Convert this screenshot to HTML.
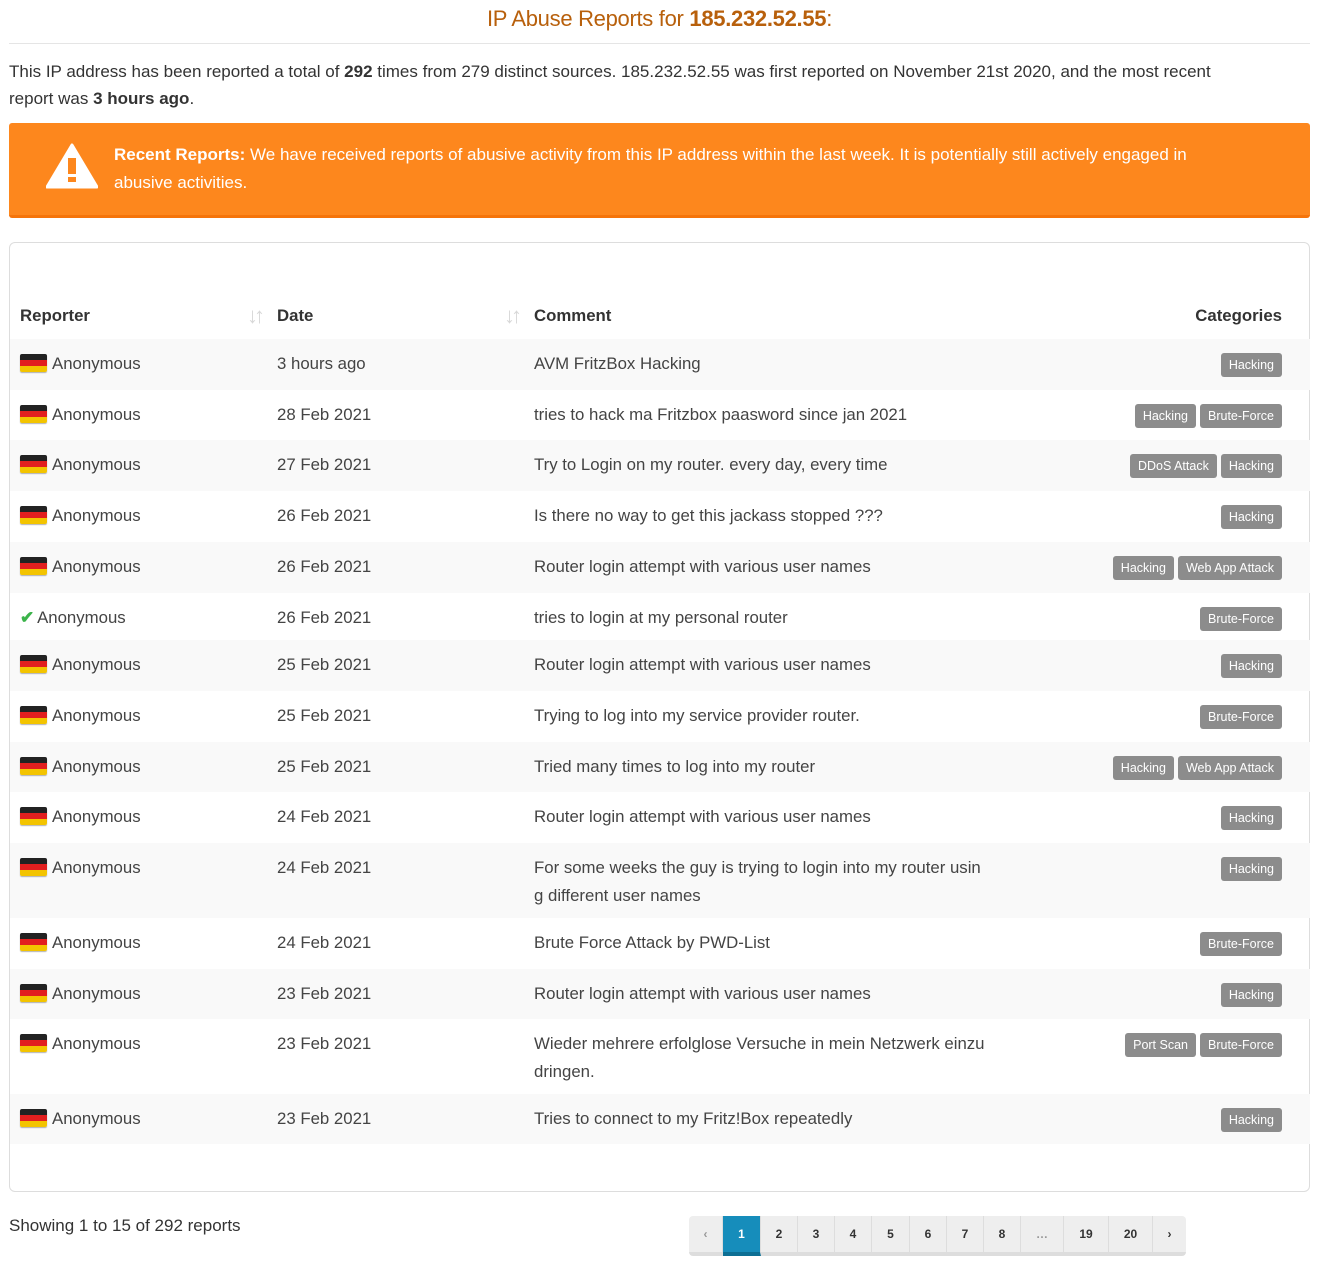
<!DOCTYPE html>
<html><head><meta charset="utf-8"><style>
*{box-sizing:border-box}
body{margin:0;background:#fff;font-family:"Liberation Sans",sans-serif;color:#444;width:1319px;height:1266px;overflow:hidden;position:relative}
h1{position:absolute;top:6px;left:0;width:1319px;text-align:center;margin:0;font-weight:normal;font-size:22px;color:#b8600c;letter-spacing:-0.3px}
h1 b{font-weight:bold}
.hr{position:absolute;top:43px;left:9px;width:1301px;border-top:1px solid #e5e5e5}
.intro{position:absolute;top:58px;left:9px;width:1245px;font-size:17px;line-height:27px;color:#333}
.alert{position:absolute;top:123px;left:9px;width:1301px;height:95px;background:#fd871d;border-bottom:3px solid #f5740a;border-radius:3px;color:#fff;font-size:17px;line-height:28px;padding:18px 80px 0 105px}
.alert svg{position:absolute;left:37px;top:20px}
.card{position:absolute;top:242px;left:9px;width:1301px;height:950px;border:1px solid #ddd;border-radius:6px}
table{position:absolute;top:50px;left:0;width:1300px;border-collapse:collapse;table-layout:fixed;font-size:16.8px;color:#444}
th{text-align:left;font-weight:bold;height:46px;vertical-align:middle;padding:0 10px;position:relative;color:#333}
td{padding:0 10px;vertical-align:top;padding-top:11px;line-height:28px}
tbody tr:nth-child(odd){background:#f9f9f9}
td.c{text-align:right;padding-right:28px;padding-top:11px}
.l{display:inline-block;background:#8c8c8c;color:#fff;font-size:12.5px;line-height:24px;padding:0 8px;border-radius:3px;margin-left:4px}
.flag{display:inline-block;width:27px;height:18px;vertical-align:-3px;margin-right:5px;background:linear-gradient(#222 0 33%,#e21f1f 33% 66%,#f3c400 66%);border-radius:2px;box-shadow:0 1px 1px rgba(0,0,0,.3)}
.sort{position:absolute;right:6px;top:10px;color:#d8d8d8;font-size:22px;font-weight:bold;letter-spacing:-4px}
.show{position:absolute;top:1216px;left:9px;font-size:17px;color:#333}
.pg{position:absolute;top:1216px;left:689px;height:40px;display:flex;background:#eee;border-radius:4px;border-bottom:4px solid #ddd;font-size:12px;font-weight:bold;color:#333}
.pg span{display:flex;align-items:center;justify-content:center;border-right:1px solid #ddd;height:36px}
.pg .a{background:#168dbb;color:#fff;border-bottom:4px solid #0d6f94;height:40px}
</style></head><body>
<h1>IP Abuse Reports for <b>185.232.52.55</b>:</h1>
<div class="hr"></div>
<div class="intro">This IP address has been reported a total of <b>292</b> times from 279 distinct sources. 185.232.52.55 was first reported on November 21st 2020, and the most recent report was <b>3 hours ago</b>.</div>
<div class="alert"><svg width="52" height="46" viewBox="0 0 52 46"><path d="M26 2 L51 44 L1 44 Z" fill="#fff" stroke="#fff" stroke-width="3" stroke-linejoin="round"/><rect x="22" y="15" width="8" height="16" fill="#fd871d"/><rect x="22" y="34" width="8" height="5" fill="#fd871d"/></svg><b>Recent Reports:</b> We have received reports of abusive activity from this IP address within the last week. It is potentially still actively engaged in abusive activities.</div>
<div class="card">
<table>
<colgroup><col style="width:257px"><col style="width:257px"><col style="width:500px"><col></colgroup>
<thead><tr><th>Reporter<span class="sort">↓↑</span></th><th>Date<span class="sort">↓↑</span></th><th>Comment</th><th style="text-align:right;padding-right:28px">Categories</th></tr></thead>
<tbody>
<tr style="height:51px"><td><i class="flag"></i>Anonymous</td><td>3 hours ago</td><td>AVM FritzBox Hacking</td><td class="c"><span class="l">Hacking</span></td></tr>
<tr style="height:50px"><td><i class="flag"></i>Anonymous</td><td>28 Feb 2021</td><td>tries to hack ma Fritzbox paasword since jan 2021</td><td class="c"><span class="l">Hacking</span><span class="l">Brute-Force</span></td></tr>
<tr style="height:51px"><td><i class="flag"></i>Anonymous</td><td>27 Feb 2021</td><td>Try to Login on my router. every day, every time</td><td class="c"><span class="l">DDoS Attack</span><span class="l">Hacking</span></td></tr>
<tr style="height:51px"><td><i class="flag"></i>Anonymous</td><td>26 Feb 2021</td><td>Is there no way to get this jackass stopped ???</td><td class="c"><span class="l">Hacking</span></td></tr>
<tr style="height:51px"><td><i class="flag"></i>Anonymous</td><td>26 Feb 2021</td><td>Router login attempt with various user names</td><td class="c"><span class="l">Hacking</span><span class="l">Web App Attack</span></td></tr>
<tr style="height:47px"><td><span style="color:#3bb34a;font-weight:bold;margin-right:3px">✔</span>Anonymous</td><td>26 Feb 2021</td><td>tries to login at my personal router</td><td class="c"><span class="l">Brute-Force</span></td></tr>
<tr style="height:51px"><td><i class="flag"></i>Anonymous</td><td>25 Feb 2021</td><td>Router login attempt with various user names</td><td class="c"><span class="l">Hacking</span></td></tr>
<tr style="height:51px"><td><i class="flag"></i>Anonymous</td><td>25 Feb 2021</td><td>Trying to log into my service provider router.</td><td class="c"><span class="l">Brute-Force</span></td></tr>
<tr style="height:50px"><td><i class="flag"></i>Anonymous</td><td>25 Feb 2021</td><td>Tried many times to log into my router</td><td class="c"><span class="l">Hacking</span><span class="l">Web App Attack</span></td></tr>
<tr style="height:51px"><td><i class="flag"></i>Anonymous</td><td>24 Feb 2021</td><td>Router login attempt with various user names</td><td class="c"><span class="l">Hacking</span></td></tr>
<tr style="height:75px"><td><i class="flag"></i>Anonymous</td><td>24 Feb 2021</td><td>For some weeks the guy is trying to login into my router usin<br>g different user names</td><td class="c"><span class="l">Hacking</span></td></tr>
<tr style="height:51px"><td><i class="flag"></i>Anonymous</td><td>24 Feb 2021</td><td>Brute Force Attack by PWD-List</td><td class="c"><span class="l">Brute-Force</span></td></tr>
<tr style="height:50px"><td><i class="flag"></i>Anonymous</td><td>23 Feb 2021</td><td>Router login attempt with various user names</td><td class="c"><span class="l">Hacking</span></td></tr>
<tr style="height:75px"><td><i class="flag"></i>Anonymous</td><td>23 Feb 2021</td><td>Wieder mehrere erfolglose Versuche in mein Netzwerk einzu<br>dringen.</td><td class="c"><span class="l">Port Scan</span><span class="l">Brute-Force</span></td></tr>
<tr style="height:50px"><td><i class="flag"></i>Anonymous</td><td>23 Feb 2021</td><td>Tries to connect to my Fritz!Box repeatedly</td><td class="c"><span class="l">Hacking</span></td></tr>
</tbody></table>
</div>
<div class="show">Showing 1 to 15 of 292 reports</div>
<div class="pg">
<span style="width:34px;color:#999">‹</span><span class="a" style="width:38px">1</span><span style="width:37px">2</span><span style="width:37px">3</span><span style="width:37px">4</span><span style="width:38px">5</span><span style="width:37px">6</span><span style="width:37px">7</span><span style="width:37px">8</span><span style="width:43px;color:#999">…</span><span style="width:45px">19</span><span style="width:44px">20</span><span style="width:33px;border:0">›</span>
</div>
</body></html>
